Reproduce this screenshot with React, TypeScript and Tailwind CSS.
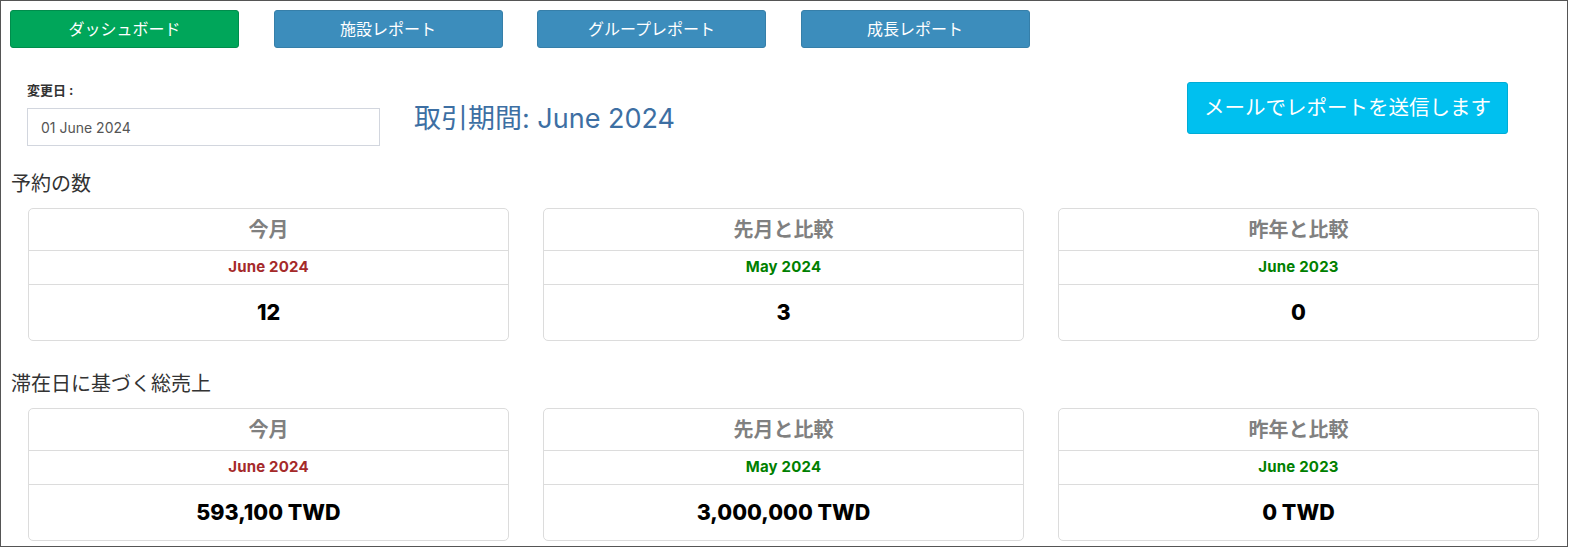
import React from 'react';

interface StatCard {
  title: string;
  period: string;
  periodColor: string;
  value: string;
}

const bookings: StatCard[] = [
  { title: '今月', period: 'June 2024', periodColor: 'text-[#a52a2a]', value: '12' },
  { title: '先月と比較', period: 'May 2024', periodColor: 'text-[#008000]', value: '3' },
  { title: '昨年と比較', period: 'June 2023', periodColor: 'text-[#008000]', value: '0' },
];

const revenue: StatCard[] = [
  { title: '今月', period: 'June 2024', periodColor: 'text-[#a52a2a]', value: '593,100 TWD' },
  { title: '先月と比較', period: 'May 2024', periodColor: 'text-[#008000]', value: '3,000,000 TWD' },
  { title: '昨年と比較', period: 'June 2023', periodColor: 'text-[#008000]', value: '0 TWD' },
];

const tabs = [
  { label: 'ダッシュボード', active: true },
  { label: '施設レポート', active: false },
  { label: 'グループレポート', active: false },
  { label: '成長レポート', active: false },
];

const latin = "font-['Inter','Noto_Sans_CJK_JP',sans-serif]";

const CardRow: React.FC<{ cards: StatCard[] }> = ({ cards }) => (
  <div className="flex gap-[34px] pl-[27px]">
    {cards.map(card => (
      <div
        key={card.title}
        className="w-[481px] h-[133px] border border-[#dcdcdc] rounded-[5px] flex flex-col text-center"
      >
        <div className="h-[42px] flex items-center justify-center border-b border-[#dcdcdc] text-[20px] font-bold text-[#808080]">
          {card.title}
        </div>
        <div className={`h-[34px] flex items-center justify-center border-b border-[#dcdcdc] text-[15px] font-bold tracking-[0.2px] ${card.periodColor}`}>
          {card.period}
        </div>
        <div className="flex-1 flex items-center justify-center text-[21.5px] font-extrabold text-black">
          {card.value}
        </div>
      </div>
    ))}
  </div>
);

export default function App() {
  return (
    <div className={`w-[1568px] h-[547px] border border-[#555] bg-white overflow-hidden ${latin}`}>
      <div className="flex gap-[34.5px] pl-[9px] pt-[9px]">
        {tabs.map(tab => (
          <button
            key={tab.label}
            className={`w-[229px] h-[38px] rounded-[3px] text-white text-[16px] border ${
              tab.active ? 'bg-[#00a65a] border-[#008d4c]' : 'bg-[#3c8dbc] border-[#367fa9]'
            }`}
          >
            {tab.label}
          </button>
        ))}
      </div>

      <div className="flex items-start pl-[26px] pr-[59px] mt-[34px]">
        <div className="w-[353px]">
          <div className="text-[13px] font-bold text-[#333] leading-[16px]">変更日 :</div>
          <div className="mt-[10px] h-[38px] border border-[#d2d6de] flex items-center px-[13px] text-[14px] text-[#555]">
            01 June 2024
          </div>
        </div>
        <div className="ml-[34px] mt-[19px] text-[27px] text-[#3d6fa3] leading-[36px]">
          取引期間: June 2024
        </div>
        <button className="ml-auto w-[321px] h-[52px] rounded-[3px] bg-[#00c0ef] border border-[#00acd6] text-white text-[20.5px]">
          メールでレポートを送信します
        </button>
      </div>

      <div className="pl-[10px] mt-[25px] text-[20px] text-[#333] leading-[26px]">予約の数</div>
      <div className="mt-[11px]">
        <CardRow cards={bookings} />
      </div>

      <div className="pl-[10px] mt-[30px] text-[20px] text-[#333] leading-[26px]">滞在日に基づく総売上</div>
      <div className="mt-[11px]">
        <CardRow cards={revenue} />
      </div>
    </div>
  );
}
